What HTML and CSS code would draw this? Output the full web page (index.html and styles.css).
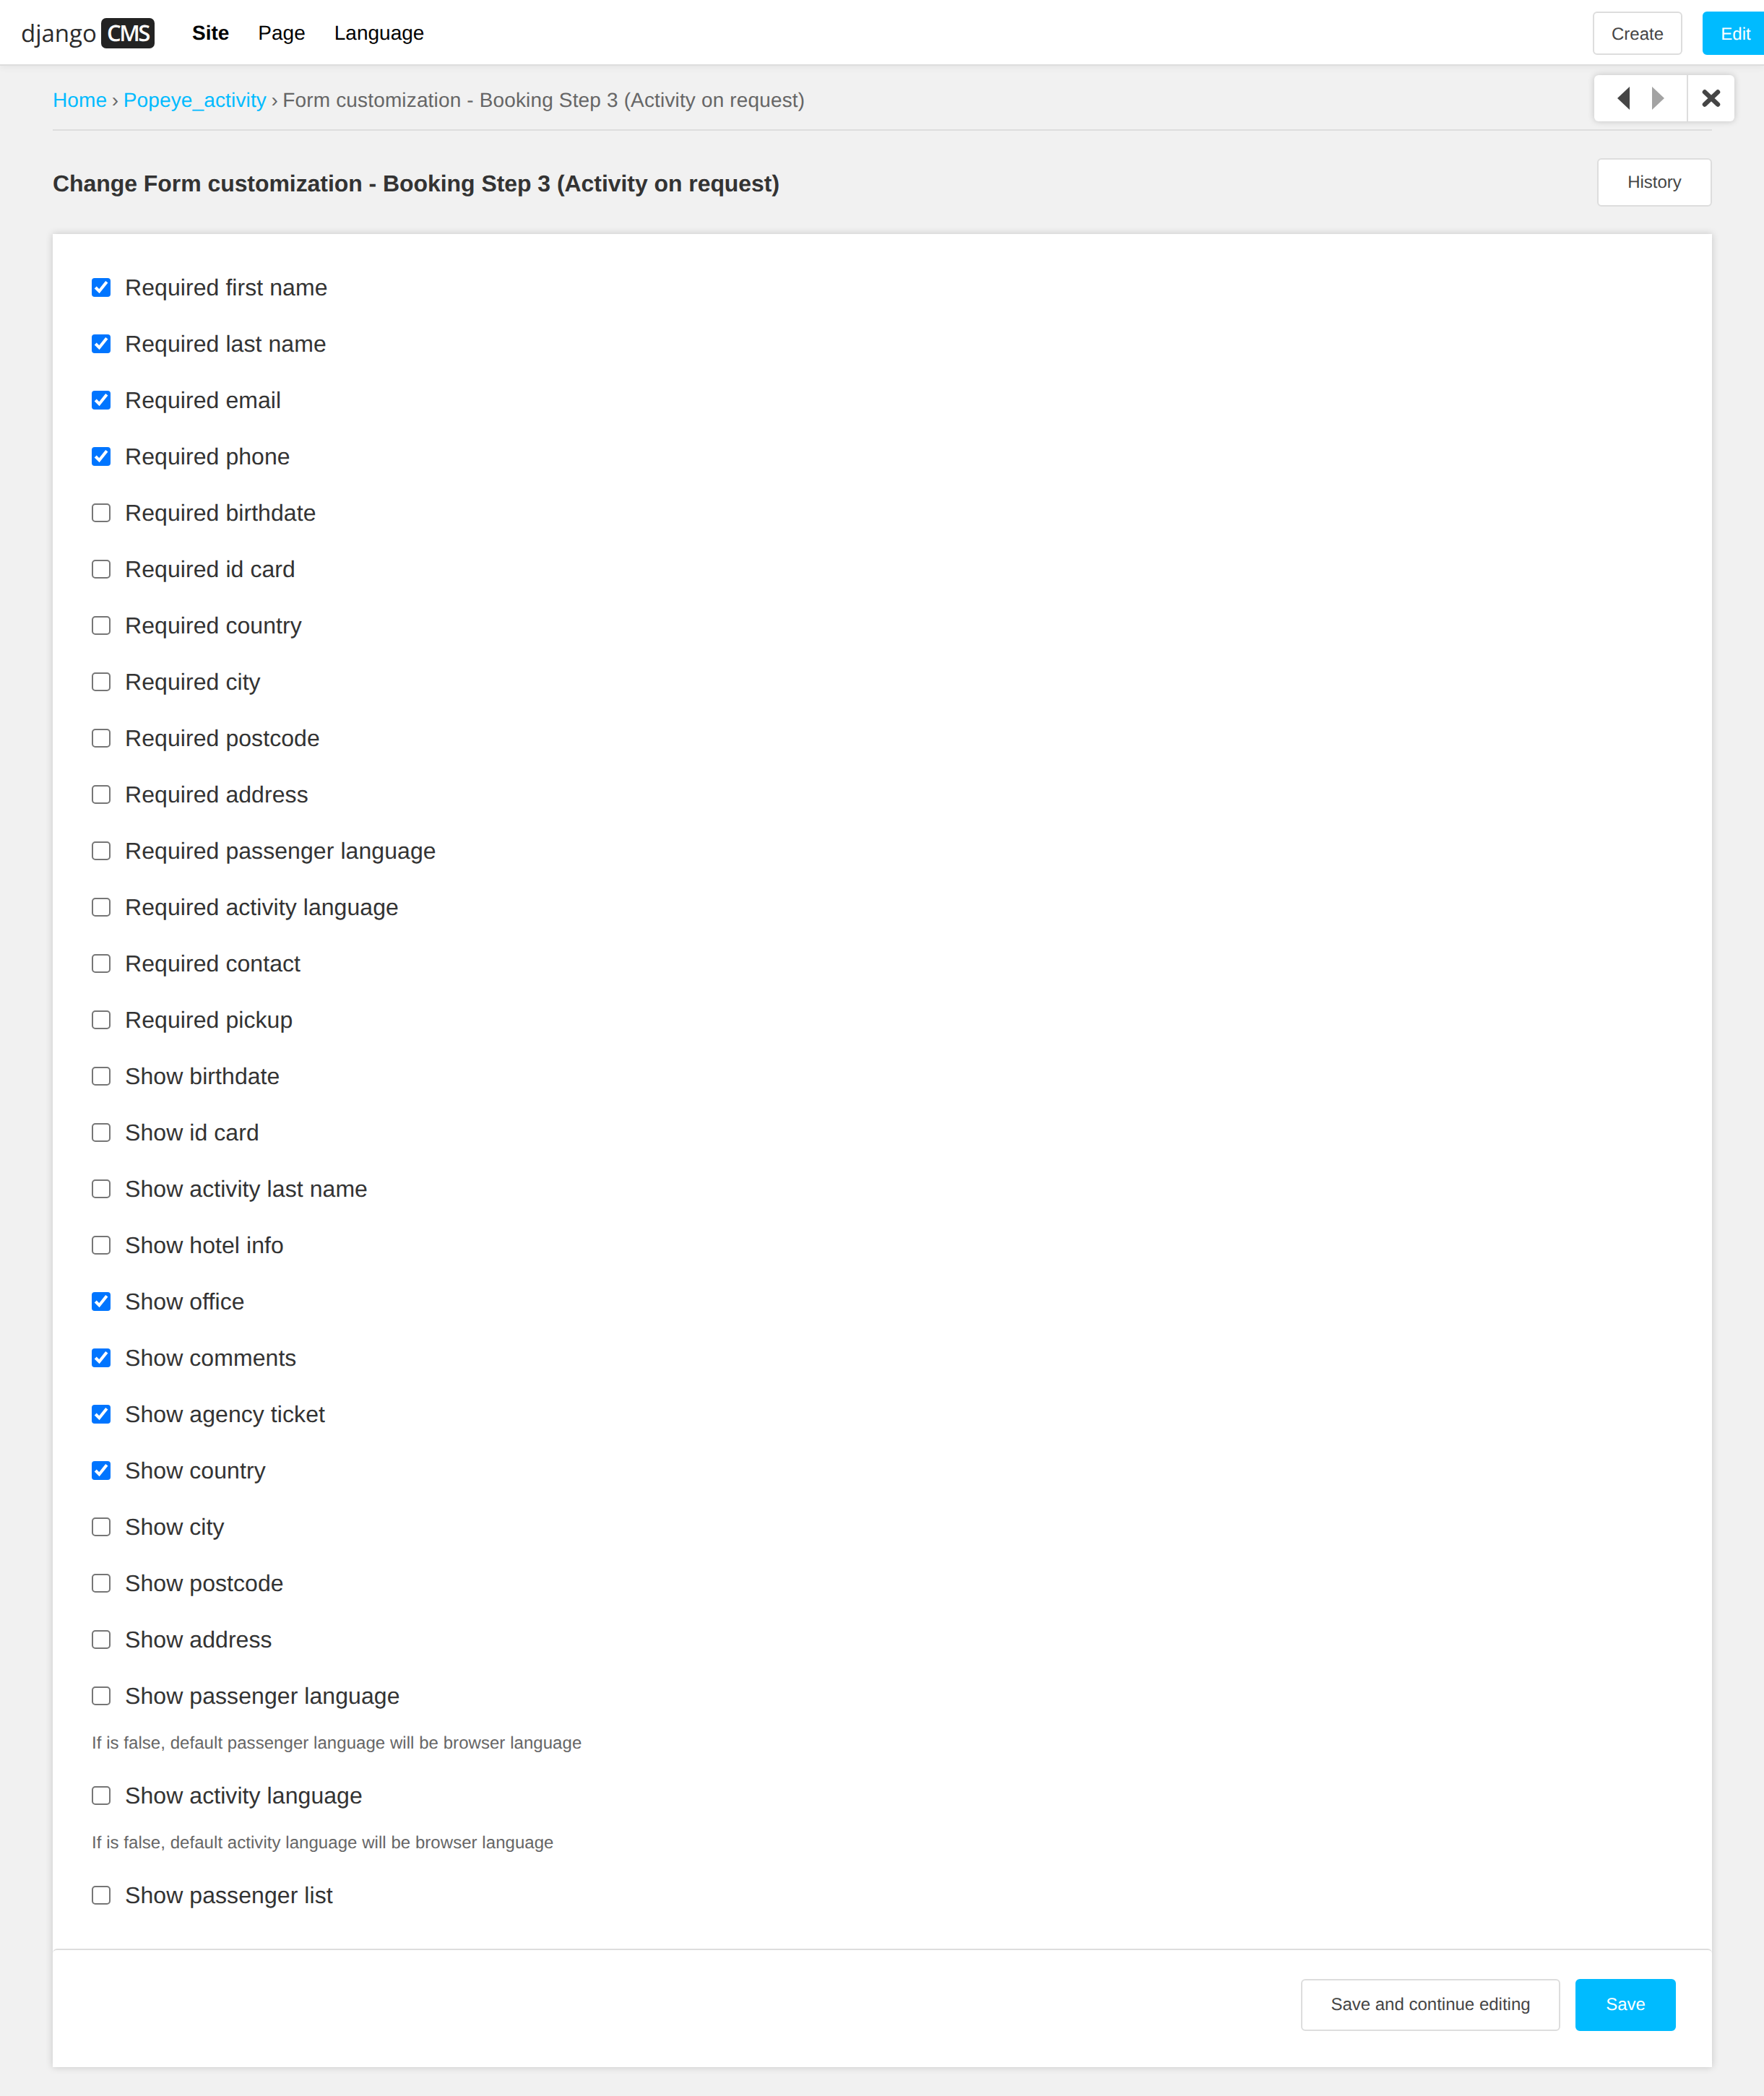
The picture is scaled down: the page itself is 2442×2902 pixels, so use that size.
FILE: index.html
```html
<html lang="en">
<head>
    <meta charset="UTF-8">
    <meta name="viewport" content="width=device-width, initial-scale=1.0">
    <title>Change Form customization</title>
    <link rel="stylesheet" href="styles.css">
</head>
<body>

<div class="toolbar">
    <div class="toolbar-left">
        <a class="logo" href="#"><span class="logo-word">django</span><span class="logo-box">CMS</span></a>
        <a class="menu-item menu-site" href="#">Site</a>
        <a class="menu-item" href="#">Page</a>
        <a class="menu-item" href="#">Language</a>
    </div>
    <div class="toolbar-right">
        <a class="btn btn-create" href="#">Create</a>
        <a class="btn btn-primary btn-edit" href="#">Edit</a>
    </div>
</div>

<div class="modal-nav">
    <div class="modal-arrows">
        <svg width="17" height="32" viewBox="0 0 17 32"><polygon points="17,0 17,32 0,16" fill="#454545"/></svg>
        <svg width="17" height="32" viewBox="0 0 17 32"><polygon points="0,0 0,32 17,16" fill="#a3a3a3"/></svg>
    </div>
    <div class="modal-close">
        <svg width="26" height="24" viewBox="0 0 26 24"><path d="M4 3.5 L22 20.5 M22 3.5 L4 20.5" stroke="#454545" stroke-width="6.5" stroke-linecap="round"/></svg>
    </div>
</div>

<div class="content">
    <div class="breadcrumbs">
        <a href="#">Home</a> <span class="sep">›</span> <a href="#">Popeye_activity</a> <span class="sep">›</span> Form customization - Booking Step 3 (Activity on request)
    </div>

    <div class="title-row">
        <h1>Change Form customization - Booking Step 3 (Activity on request)</h1>
        <a class="btn btn-history" href="#">History</a>
    </div>

    <form class="card">
        <div class="fields">
            <label class="row"><input type="checkbox" checked>Required first name</label>
            <label class="row"><input type="checkbox" checked>Required last name</label>
            <label class="row"><input type="checkbox" checked>Required email</label>
            <label class="row"><input type="checkbox" checked>Required phone</label>
            <label class="row"><input type="checkbox">Required birthdate</label>
            <label class="row"><input type="checkbox">Required id card</label>
            <label class="row"><input type="checkbox">Required country</label>
            <label class="row"><input type="checkbox">Required city</label>
            <label class="row"><input type="checkbox">Required postcode</label>
            <label class="row"><input type="checkbox">Required address</label>
            <label class="row"><input type="checkbox">Required passenger language</label>
            <label class="row"><input type="checkbox">Required activity language</label>
            <label class="row"><input type="checkbox">Required contact</label>
            <label class="row"><input type="checkbox">Required pickup</label>
            <label class="row"><input type="checkbox">Show birthdate</label>
            <label class="row"><input type="checkbox">Show id card</label>
            <label class="row"><input type="checkbox">Show activity last name</label>
            <label class="row"><input type="checkbox">Show hotel info</label>
            <label class="row"><input type="checkbox" checked>Show office</label>
            <label class="row"><input type="checkbox" checked>Show comments</label>
            <label class="row"><input type="checkbox" checked>Show agency ticket</label>
            <label class="row"><input type="checkbox" checked>Show country</label>
            <label class="row"><input type="checkbox">Show city</label>
            <label class="row"><input type="checkbox">Show postcode</label>
            <label class="row"><input type="checkbox">Show address</label>
            <label class="row"><input type="checkbox">Show passenger language</label>
            <div class="help">If is false, default passenger language will be browser language</div>
            <label class="row"><input type="checkbox">Show activity language</label>
            <div class="help">If is false, default activity language will be browser language</div>
            <label class="row"><input type="checkbox">Show passenger list</label>
        </div>
        <div class="submit-row">
            <a class="btn btn-continue" href="#">Save and continue editing</a>
            <a class="btn btn-primary btn-save" href="#">Save</a>
        </div>
    </form>
</div>

</body>
</html>
```

FILE: styles.css
```css
* {
    box-sizing: border-box;
}
body {
    font-family: "Liberation Sans", Arial, sans-serif;
    margin: 0;
    background-color: #f1f1f1;
    color: #333;
    overflow-x: hidden;
    text-rendering: geometricPrecision;
}
a {
    text-decoration: none;
}

/* top bar */
.toolbar {
    display: flex;
    justify-content: space-between;
    align-items: center;
    height: 91px;
    padding: 3px 0 0 29px;
    background: #fff;
    border-bottom: 2px solid #ddd;
    box-shadow: 0 2px 10px rgba(0, 0, 0, 0.06);
}
.toolbar-left {
    display: flex;
    align-items: center;
}
.logo {
    display: flex;
    align-items: center;
    width: 185px;
    margin-right: 52px;
    color: #2b2b2b;
}
.logo-word {
    font-family: "Open Sans", sans-serif;
    font-size: 33px;
    line-height: 42px;
    width: 111px;
}
.logo-box {
    font-family: "Open Sans", sans-serif;
    font-size: 31px;
    font-weight: 600;
    letter-spacing: -2.5px;
    line-height: 42px;
    width: 74px;
    height: 42px;
    text-align: center;
    color: #fff;
    background: #232323;
    border-radius: 7px;
}
.menu-item {
    font-size: 28px;
    color: #000;
    margin-right: 40px;
}
.menu-site {
    font-weight: bold;
}
.toolbar-right {
    display: flex;
    gap: 28px;
    width: 237px;
    flex-shrink: 0;
    overflow: hidden;
}

/* buttons */
.btn {
    display: flex;
    align-items: center;
    justify-content: center;
    flex-shrink: 0;
    font-size: 24px;
    color: #454545;
    background: #fff;
    border: 2px solid #ddd;
    border-radius: 6px;
}
.btn-primary {
    color: #fff;
    background: #00bbff;
    border-color: #00bbff;
}
.btn-create {
    width: 124px;
    height: 60px;
    padding-top: 3px;
}
.btn-edit {
    width: 92px;
    height: 60px;
    padding-top: 3px;
}
.btn-history {
    width: 159px;
    height: 67px;
}
.btn-continue {
    width: 359px;
    height: 72px;
}
.btn-save {
    width: 139px;
    height: 72px;
}

/* floating prev / next / close box */
.modal-nav {
    position: absolute;
    top: 104px;
    left: 2207px;
    width: 194px;
    height: 64px;
    display: flex;
    background: #fff;
    border-radius: 6px;
    box-shadow: 0 0 10px rgba(0, 0, 0, 0.2);
}
.modal-arrows {
    display: flex;
    align-items: center;
    justify-content: center;
    gap: 31px;
    width: 130px;
    border-right: 2px solid #ddd;
}
.modal-close {
    display: flex;
    align-items: center;
    justify-content: center;
    flex: 1;
}

/* page content */
.content {
    padding: 0 72px 40px 73px;
}
.breadcrumbs {
    height: 90px;
    padding-top: 32px;
    font-size: 28px;
    letter-spacing: 0.15px;
    line-height: 32px;
    color: #666;
    border-bottom: 2px solid #ddd;
}
.breadcrumbs a {
    color: #00bbff;
}
.sep {
    margin: 0 -1.5px;
}
.title-row {
    display: flex;
    justify-content: space-between;
    align-items: center;
    height: 143px;
}
h1 {
    font-size: 32px;
    font-weight: bold;
    letter-spacing: -0.06px;
    margin: 4px 0 0;
    color: #333;
}

/* form card */
.card {
    display: block;
    background: #fff;
    box-shadow: 0 0 10px rgba(0, 0, 0, 0.18);
}
.fields {
    padding: 35px 54px 35px 54px;
}
.row {
    display: flex;
    align-items: center;
    height: 78px;
    font-size: 32px;
    letter-spacing: 0.07px;
    color: #333;
}
/* zoom keeps the native box, just twice the size */
.row input {
    zoom: 2;
    margin: 0 10px 0 0;
}
.help {
    height: 60px;
    padding-top: 13px;
    font-size: 24px;
    letter-spacing: 0.05px;
    line-height: 28px;
    color: #666;
}
.submit-row {
    display: flex;
    justify-content: flex-end;
    gap: 21px;
    height: 164px;
    padding: 40px 50px 0 0;
    border-top: 2px solid #ddd;
    border-radius: 6px 6px 0 0;
}
```
